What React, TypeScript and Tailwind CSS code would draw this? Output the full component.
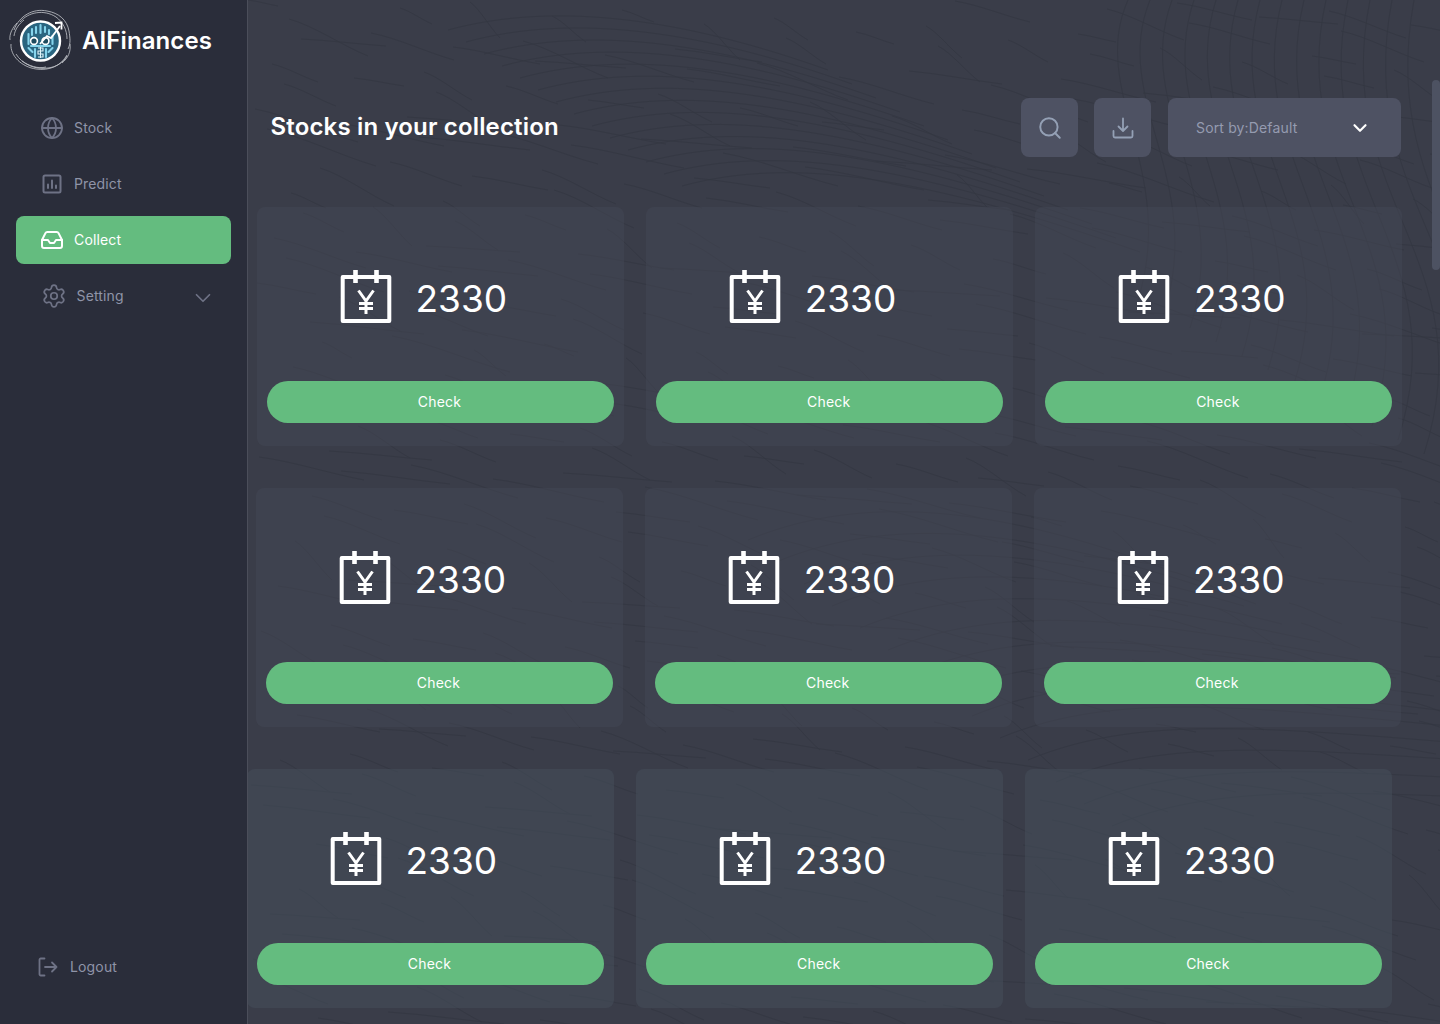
import { ChevronDown, Globe, Inbox, Search, Settings } from "lucide-react";

const inter = "font-['Inter',sans-serif]";

// faint wood-grain lines behind the main panel
const grain: string[] = [];
for (let i = 0; i < 520; i++) {
  const x = (i * 173) % 1192;
  const y = (i * 311) % 1024;
  const dx = 30 + (i * 37) % 90;
  const dy = 6 + (i * 53) % 34;
  grain.push(`M${x} ${y}c${dx / 3} ${dy / 5} ${dx / 1.5} ${dy / 1.4} ${dx} ${dy}`);
}
const rings: string[] = [];
for (let i = 0; i < 14; i++) {
  rings.push(`M${880 + i * 22} 0c-40 ${90 + i * 10} ${50 + i * 6} ${170 + i * 8} ${10 + i * 4} ${300 + i * 14}`);
  rings.push(`M${500 + i * 28} ${540 + i * 22}c120 -50 260 -30 ${420 + i * 10} ${30 - i * 4}`);
  rings.push(`M${200 + i * 18} ${30 + i * 12}c110 -30 240 -10 ${380 + i * 6} ${40 + i * 2}`);
}

function Logo() {
  return (
    <svg width="64" height="64" viewBox="0 0 64 64" fill="none" className="shrink-0">
      <g stroke="#c4c6cc" strokeWidth="0.8">
        <path d="M6 22C11 8 25 0 39 3c12 2 20 9 22 20 1 7 2 12-1 18" />
        <path d="M3 36c-1 12 11 23 25 25 13 2 25-3 31-14" />
        <path d="M12 14C20 4 36 1 48 9c7 5 11 13 11 22" />
        <path d="M8 46c6 10 19 16 32 14 8-1 15-5 19-12" />
        <path d="M2 32c-1-6 3-13 7-17M62 36c1 8-2 14-8 19M6 28c1-7 5-12 10-16M14 53c7 5 16 8 24 6" />
      </g>
      <circle cx="32.500" cy="33" r="19.500" fill="#2a6580" stroke="#fff" strokeWidth="2.400" />
      <g stroke="#86d4ec" strokeWidth="2.100" strokeLinecap="round">
        <path d="M20.500 26v10M24 21v6M28 19v6M32.500 17v8M37 19v5M41 22v4M44.500 28v8" />
        <path d="M20.500 40l4 4M44.500 40l-4 4M27 41v8M38 41v8" />
        <path d="M23 38h19" />
      </g>
      <path d="M30 40h5v3h-5v3h5v3h-5M32.500 39v11" stroke="#e2f5fa" strokeWidth="1.100" />
      <circle cx="26" cy="33" r="3.400" fill="#1d4a5e" stroke="#fff" strokeWidth="1.600" />
      <circle cx="37.500" cy="33" r="3.400" fill="#1d4a5e" stroke="#fff" strokeWidth="1.600" />
      <path d="M32 36l7-8 4 2 9-12" stroke="#fff" strokeWidth="1.800" />
      <path d="M47 15l6.500-.500v7" stroke="#fff" strokeWidth="1.800" />
    </svg>
  );
}

function PredictIcon() {
  return (
    <svg width="20" height="20" viewBox="0 0 20 20" fill="none" stroke="currentColor" strokeWidth="2" strokeLinecap="round">
      <rect x="1.500" y="1.500" width="17" height="17" rx="1.500" />
      <path d="M6 10.500v3.500M10 6.500v7.500M14 11.500v2.500" />
    </svg>
  );
}

function DownloadIcon() {
  return (
    <svg width="22" height="22" viewBox="0 0 22 22" fill="none" stroke="currentColor" strokeWidth="1.800" strokeLinecap="round" strokeLinejoin="round">
      <path d="M11 1.500v12M6.500 9.500l4.500 4.500 4.500-4.500" />
      <path d="M1.500 14v5a1.500 1.500 0 0 0 1.500 1.500h16a1.500 1.500 0 0 0 1.500-1.500v-5" />
    </svg>
  );
}

function LogoutIcon() {
  return (
    <svg width="20" height="20" viewBox="0 0 20 20" fill="none" stroke="currentColor" strokeWidth="1.800" strokeLinecap="round" strokeLinejoin="round">
      <path d="M6.500 1.500H2.700a1.200 1.200 0 0 0-1.200 1.200v14.600a1.200 1.200 0 0 0 1.200 1.200h3.800" />
      <path d="M7 10h11.500M14 5.500l4.500 4.500-4.500 4.500" />
    </svg>
  );
}

function YenCalendar() {
  return (
    <svg width="52" height="54" viewBox="0 0 52 54" fill="none" stroke="#fff" className="shrink-0">
      <path d="M2.700 7h46.600v44H2.700z" strokeWidth="4" strokeLinejoin="round" />
      <path d="M15.500 0v13M36.500 0v13" strokeWidth="4.600" />
      <path d="M18.500 20.500L26 31l7.500-10.500M26 31v13M19 33.500h14M19 38.500h14" strokeWidth="3" />
    </svg>
  );
}

function NavItem({ icon, label, active }: { icon: React.ReactNode; label: string; active?: boolean }) {
  return (
    <div
      className={
        active
          ? "flex h-12 items-center gap-[10.500px] rounded-lg bg-[#64bc7f] pl-[23.500px] text-sm tracking-[0.15px] text-white"
          : "flex h-12 items-center gap-[10.500px] pl-[23.500px] text-sm tracking-[0.15px] text-[#8f94a8]"
      }
    >
      {icon}
      {label}
    </div>
  );
}

function StockCard({ tint }: { tint?: boolean }) {
  return (
    <div
      className={
        tint
          ? "flex h-[239px] w-[367px] flex-col rounded-lg bg-[#45505c]/50 px-[10px] pt-[63px]"
          : "flex h-[239px] w-[367px] flex-col rounded-lg bg-[#444a56]/45 px-[10px] pt-[63px]"
      }
    >
      <div className="flex h-[54px] items-center gap-[23.500px] pl-[73px]">
        <YenCalendar />
        <span className="pt-[3px] text-[37px] leading-none text-white">2330</span>
      </div>
      <button className="mt-[57px] h-[42px] w-[347px] rounded-full bg-[#64bc7f] pr-[2px] text-sm tracking-[0.2px] text-white">Check</button>
    </div>
  );
}

function CardRow({ className, tint }: { className: string; tint?: boolean }) {
  return (
    <div className={`flex gap-[22.200px] ${className}`}>
      <StockCard tint={tint} />
      <StockCard tint={tint} />
      <StockCard tint={tint} />
    </div>
  );
}

export default function App() {
  return (
    <div className={`flex h-[1024px] w-[1440px] overflow-hidden bg-[#2a2d3a] ${inter}`}>
      <aside className="flex w-[248px] shrink-0 flex-col border-r border-[#4b4e5a] bg-[#2a2d3a]">
        <div className="flex items-center gap-[10px] pl-2 pt-2">
          <Logo />
          <span className="mt-px text-2xl font-semibold tracking-[0.1px] text-white">AIFinances</span>
        </div>
        <nav className="mt-[32px] flex flex-col gap-2 px-4 [&>div]:w-[215px]">
          <NavItem icon={<Globe size={24} strokeWidth={1.8} className="text-[#6e7285]" />} label="Stock" />
          <NavItem
            icon={
              <span className="px-[2px] text-[#6e7285]">
                <PredictIcon />
              </span>
            }
            label="Predict"
          />
          <NavItem icon={<Inbox size={24} strokeWidth={2} />} label="Collect" active />
          <div className="flex h-12 items-center gap-[9.500px] pl-[25px] pr-[15px] text-sm tracking-[0.15px] text-[#8f94a8]">
            <Settings size={26} strokeWidth={1.6} className="text-[#6e7285]" />
            <span className="flex-1">Setting</span>
            <ChevronDown size={26} strokeWidth={1.6} className="mt-1 text-[#6e7285]" />
          </div>
        </nav>
        <div className="mb-[47px] mt-auto flex items-center gap-[12px] pl-[38px] text-sm tracking-[0.15px] text-[#8f94a8]">
          <span className="text-[#6e7285]">
            <LogoutIcon />
          </span>
          Logout
        </div>
      </aside>

      <main className="relative min-w-0 flex-1 overflow-hidden bg-[#3a3d49]">
        <svg width="1192" height="1024" className="absolute inset-0" fill="none" stroke="#2f323c" strokeWidth="0.8" opacity="0.55">
          {grain.map((d) => (
            <path key={d} d={d} />
          ))}
          {rings.map((d) => (
            <path key={d} d={d} />
          ))}
        </svg>

        <div className="relative">
          <div className="ml-[22.500px] mr-[39px] mt-[98px] flex h-[59px] items-center">
            <h1 className="mb-0.5 flex-1 text-2xl font-semibold tracking-[0.16px] text-white">Stocks in your collection</h1>
            <button className="flex h-[59px] w-[57px] items-center justify-center rounded-lg bg-[#4e5263] text-[#94a0b5]">
              <Search size={26} strokeWidth={1.8} />
            </button>
            <button className="ml-4 flex h-[59px] w-[57px] items-center justify-center rounded-lg bg-[#4e5263] text-[#94a0b5]">
              <DownloadIcon />
            </button>
            <div className="ml-[17px] flex h-[59px] w-[233px] items-center justify-between rounded-lg bg-[#4e5263] pl-7 pr-[30px] text-sm tracking-[0.15px] text-[#959bb0]">
              Sort by:Default
              <ChevronDown size={22} strokeWidth={2.4} className="text-white" />
            </div>
          </div>

          <div className="mt-[50px] flex flex-col gap-[41.800px]">
            <CardRow className="ml-[9px]" />
            <CardRow className="ml-[8px]" />
            <CardRow className="-ml-px" tint />
          </div>
        </div>

        <div className="absolute right-0 top-[80px] h-[190px] w-2 rounded-full bg-[#4d5262]" />
      </main>
    </div>
  );
}
